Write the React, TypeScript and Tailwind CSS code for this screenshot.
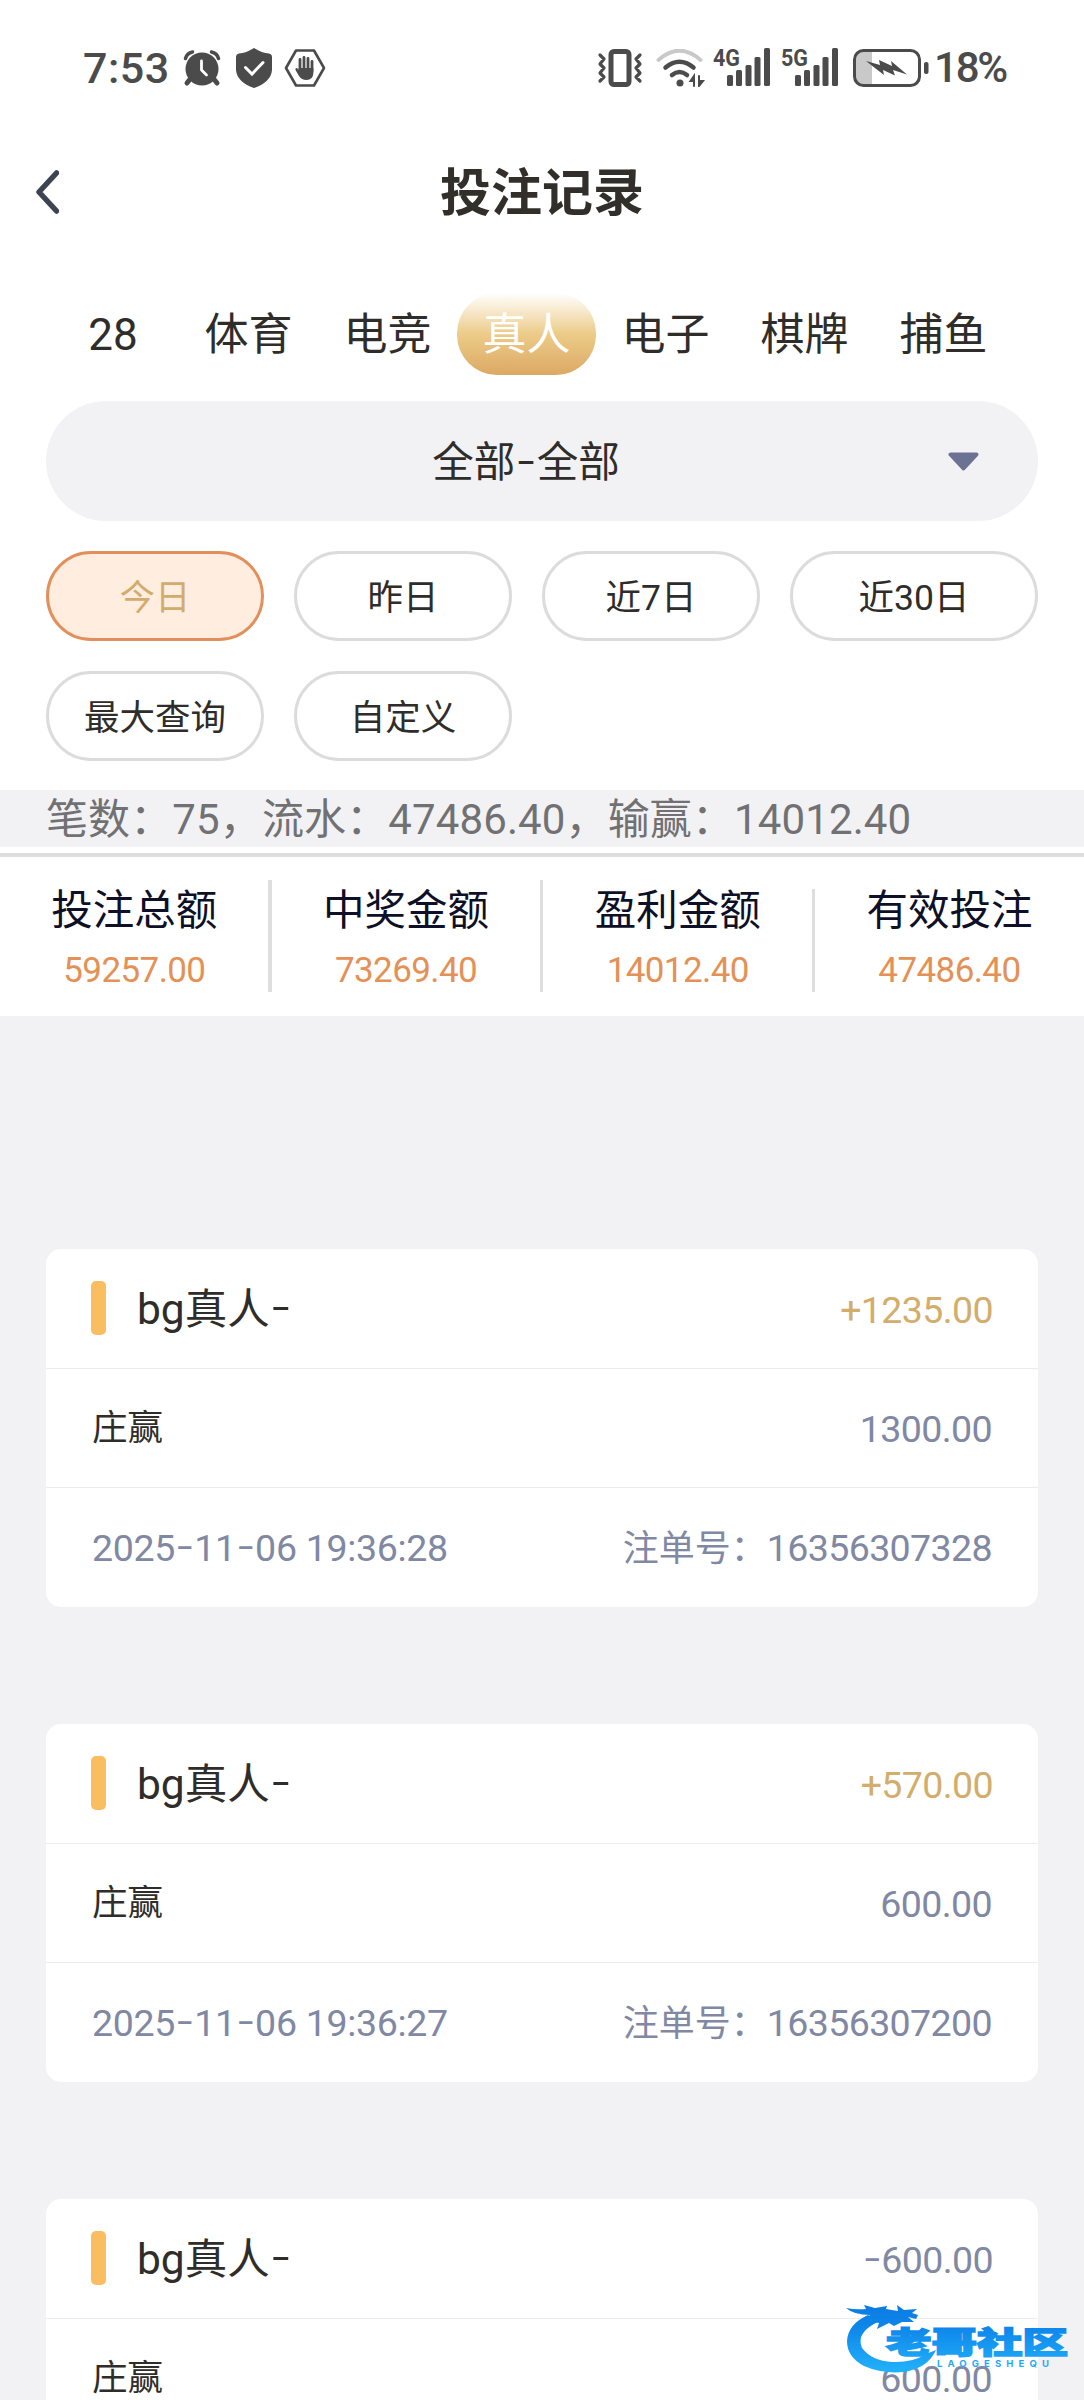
import React from 'react';

const TABS = ['28', '体育', '电竞', '真人', '电子', '棋牌', '捕鱼'];
const RANGES = ['今日', '昨日', '近7日', '近30日', '最大查询', '自定义'];

const STATS = [
  { label: '投注总额', value: '59257.00' },
  { label: '中奖金额', value: '73269.40' },
  { label: '盈利金额', value: '14012.40' },
  { label: '有效投注', value: '47486.40' },
];

const RECORDS = [
  { result: '+1235.00', stake: '1300.00', date: '2025-11-06', time: '19:36:28', no: '16356307328' },
  { result: '+570.00', stake: '600.00', date: '2025-11-06', time: '19:36:27', no: '16356307200' },
  { result: '-600.00', stake: '600.00', date: '2025-11-06', time: '19:36:25', no: '16356307064' },
];

// Roboto's hyphen is too short, so dashes are set in Inter
const Dashed: React.FC<{ text: string }> = ({ text }) => (
  <>
    {text.split('-').map((part, i) => (
      <React.Fragment key={i}>
        {i > 0 && <span className="font-['Inter'] text-[1.15em] font-light leading-none">-</span>}
        {part}
      </React.Fragment>
    ))}
  </>
);

const Signal: React.FC<{ label: string }> = ({ label }) => (
  <svg className="overflow-visible" width="58" height="40" viewBox="0 0 58 40" fill="#4b4b4b">
    <text x="0" y="18" fontSize="24" fontWeight="700" fontFamily="Roboto" textLength="27" lengthAdjust="spacingAndGlyphs">{label}</text>
    <rect x="14" y="27" width="6" height="11" rx="1.5" />
    <rect x="23" y="22" width="6" height="16" rx="1.5" />
    <rect x="32.500" y="17" width="6" height="21" rx="1.5" />
    <rect x="41.500" y="9" width="6" height="29" rx="1.5" />
    <rect x="51" y="0" width="6" height="38" rx="1.5" />
  </svg>
);

const StatusBar: React.FC = () => (
  <div className="flex h-[136px] items-start justify-between pl-[83px] pr-[76px] pt-[48px] text-[#4b4b4b]">
    <div className="flex h-[40px] items-center">
      <span className="w-[100px] text-[43px] font-medium leading-[40px] tracking-[0.5px]">7:53</span>
      <svg width="38" height="38" viewBox="0 0 38 38">
        <g stroke="#4b4b4b" strokeWidth="5" strokeLinecap="round" fill="none">
          <path d="M8 29l-4 5M30 29l4 5" />
          <path d="M2.500 9.500Q4 4 9.500 3M35.500 9.500Q34 4 28.500 3" strokeWidth="3.500" />
        </g>
        <circle cx="19" cy="20" r="16.500" fill="#4b4b4b" />
        <path d="M18.500 12v9l5 5" stroke="#fff" strokeWidth="2.800" fill="none" strokeLinecap="round" strokeLinejoin="round" />
      </svg>
      <svg className="ml-[15px]" width="36" height="40" viewBox="0 0 36 40">
        <path d="M18 0Q26 5 33 5.500Q36 6 36 9V22Q35 34 18 40Q1 34 0 22V9Q0 6 3 5.500Q10 5 18 0Z" fill="#4b4b4b" />
        <path d="M9.500 19.500l6.500 6.500l11-11.500" stroke="#fff" strokeWidth="3" fill="none" strokeLinecap="round" />
      </svg>
      <svg className="ml-[12px]" width="42" height="38" viewBox="0 0 42 38">
        <path d="M12 1.500H30L40 19L30 36.500H12L2 19Z" fill="none" stroke="#4b4b4b" strokeWidth="2.600" strokeLinejoin="round" />
        <path d="M16 22V10.500M20 20V8.500M24 20V9.500M28 22V12.500" stroke="#4b4b4b" strokeWidth="2.800" strokeLinecap="round" />
        <path d="M14.600 19H29.400V24Q29 31 22.500 31Q17.500 31 15 27L11.500 21Q11 19 12.500 19Q13.500 19 14.600 21Z" fill="#4b4b4b" />
      </svg>
    </div>
    <div className="flex h-[40px] items-center">
      <svg width="46" height="38" viewBox="0 0 46 38" fill="none" stroke="#4b4b4b">
        <rect x="14" y="2.500" width="18" height="33" rx="3" strokeWidth="5" />
        <path d="M3 6l4 4l-4 5l4 4l-4 5l4 4l-4 4M43 6l-4 4l4 5l-4 4l4 5l-4 4l4 4" strokeWidth="3.200" strokeLinecap="round" strokeLinejoin="round" />
      </svg>
      <svg className="ml-[13px]" width="50" height="38" viewBox="0 0 50 38" fill="none" strokeLinecap="round">
        <path d="M2.500 11Q23.500 -7.500 44.500 11" stroke="#c9c9c9" strokeWidth="4" />
        <path d="M9.500 18.500Q23.500 7 37.500 18.500" stroke="#4b4b4b" strokeWidth="4.500" />
        <path d="M16 26Q23.500 20 31 26" stroke="#4b4b4b" strokeWidth="4.500" />
        <circle cx="24" cy="34" r="3.500" fill="#4b4b4b" />
        <path d="M38 37V27L34.500 32H38M43 27V37L47 32H43" stroke="#4b4b4b" strokeWidth="2" fill="#4b4b4b" />
      </svg>
      <div className="ml-[7px]"><Signal label="4G" /></div>
      <div className="ml-[10px]"><Signal label="5G" /></div>
      <svg className="ml-[14px]" width="76" height="38" viewBox="0 0 76 38">
        <path d="M10 2H19V36H10Q2 36 2 28V10Q2 2 10 2Z" fill="#c9c9c9" />
        <rect x="1.500" y="1.500" width="65" height="35" rx="9" fill="none" stroke="#4b4b4b" strokeWidth="3" />
        <rect x="71" y="13" width="4.500" height="12" rx="2" fill="#4b4b4b" />
        <path d="M13 12L27 16L26 11L39 17L38 12L54 25.500L40 21L42 26.500L30 21L31 26Z" fill="#4b4b4b" />
      </svg>
      <span className="ml-[5px] w-[74px] whitespace-nowrap text-[42px] font-medium leading-[42px] tracking-[-2.200px]">18%</span>
    </div>
  </div>
);

const Header: React.FC = () => (
  <header className="flex h-[112px] items-center pl-[35px] pr-[59px]">
    <svg width="24" height="44" viewBox="0 0 24 44" fill="none">
      <path d="M21.500 3L4 22L21.500 41" stroke="#3e4354" strokeWidth="5.500" strokeLinecap="round" strokeLinejoin="round" />
    </svg>
    <h1 className="flex-1 pt-[2px] text-center text-[51px] font-bold leading-none text-[#322e2a]">投注记录</h1>
  </header>
);

const Watermark: React.FC = () => (
  <svg className="absolute bottom-[26px] right-[16px]" width="224" height="72" viewBox="0 0 224 72">
    <defs>
      <linearGradient id="wm" x1="0" y1="0" x2="0" y2="72" gradientUnits="userSpaceOnUse">
        <stop offset="0" stopColor="#0b7be0" />
        <stop offset="0.350" stopColor="#0e86ea" />
        <stop offset="1" stopColor="#22b4fa" />
      </linearGradient>
    </defs>
    <g fill="url(#wm)">
      <path d="M24 13Q4 22 3 39Q3 55 20 64Q38 72 60 70Q84 66 92 48L82 52Q68 61 48 60Q28 59 18 46Q11 30 36 19Z" />
      <path d="M2 6Q12 8 22 7L20 3L31 6L43 4L42 7L54 9L53 3L60 8L73 7L68 11L74 13L72 17L64 15L70 20L58 20L50 24L45 21L33 27L35 21L22 19L26 13Q10 13 2 6Z" />
      <text x="42" y="51" fontSize="30" fontWeight="900" fontFamily="'Noto Sans CJK SC', sans-serif" stroke="url(#wm)" strokeWidth="1.600" textLength="182" lengthAdjust="spacingAndGlyphs">老哥社区</text>
      <text x="93" y="64.500" fontSize="9.500" fontWeight="700" fontFamily="Inter" textLength="112">LAOGESHEQU</text>
    </g>
  </svg>
);

export default function App() {
  return (
    <div className="relative flex h-[2400px] w-[1084px] flex-col overflow-hidden bg-[#f2f2f4] font-['Roboto','Noto_Sans_CJK_SC',sans-serif] text-[#2f2d2a]">
      <div className="h-[790px] shrink-0 bg-white">
        <StatusBar />
        <Header />

        <nav className="flex h-[153px] items-center pl-[47px] pt-[18px]">
          {TABS.map((tab, i) => (
            <button
              key={tab}
              className={`h-[82px] shrink-0 pt-[2px] text-[44px] leading-none ${i === 0 ? 'w-[132px]' : 'w-[139px]'} ${
                tab === '真人' ? 'rounded-[40px] bg-linear-to-b from-white via-[#eccb88] to-[#dba964] text-white' : ''
              }`}
            >
              {tab}
            </button>
          ))}
        </nav>

        <div className="px-[46px]">
          <div className="flex h-[120px] items-center rounded-full bg-[#f2f2f4] pl-[46px] pr-[59px]">
            <span className="flex-1 pl-[12px] pt-[4px] text-center text-[41.500px]"><Dashed text="全部-全部" /></span>
            <svg width="31" height="19" viewBox="0 0 31 19">
              <path d="M2.500 2.500H28.500L15.500 16.500Z" fill="#6b7293" stroke="#6b7293" strokeWidth="4" strokeLinejoin="round" />
            </svg>
          </div>

          <div className="mt-[30px] grid grid-cols-[218px_218px_218px_248px] gap-[30px]">
            {RANGES.map((range) => (
              <button
                key={range}
                className={`h-[90px] rounded-full border-[3.500px] pt-[5px] text-[35.500px] leading-none ${
                  range === '今日' ? 'border-[#e28f5c] bg-[#ffeddf] text-[#d2ac6c]' : 'border-[#dcdcdc]'
                }`}
              >
                {range}
              </button>
            ))}
          </div>
        </div>
      </div>

      <div className="h-[57px] shrink-0 whitespace-nowrap pl-[46px] pt-[2px] text-[42px] leading-[56px] tracking-[0.120px] text-[#717173]">
        笔数：75，流水：47486.40，输赢：14012.40
      </div>

      <div className="h-[169px] shrink-0 bg-white pt-[6px]">
        <div className="h-[4px] bg-[#dedede]" />
        <div className="flex pt-[23px]">
          {STATS.map((stat, i) => (
            <div key={stat.label} className="relative flex h-[112px] w-[271.700px] shrink-0 flex-col items-center pr-[3px]">
              <span className="mt-[6px] text-[41.500px] leading-[50px] text-[#0d1026]">{stat.label}</span>
              <span className="mt-[12px] text-[35px] leading-[46px] tracking-[-0.600px] text-[#e39156]">{stat.value}</span>
              {i < 3 && (
                <span className={`absolute bottom-0 right-0 w-[3.500px] bg-[#dedede] ${i === 2 ? 'h-[103px]' : 'h-[112px]'}`} />
              )}
            </div>
          ))}
        </div>
      </div>

      <main className="flex flex-col gap-[117px] px-[46px] pt-[233px]">
        {RECORDS.map((record) => (
          <article key={record.no} className="h-[358px] shrink-0 divide-y divide-[#ececee] rounded-[15px] bg-white text-[37.500px] tracking-[-0.600px] text-[#8088a3]">
            <div className="flex h-[119.500px] items-center px-[45px]">
              <span className="h-[54px] w-[15px] rounded-[5px] bg-[#fabd60]" />
              <span className="ml-[31px] flex-1 pt-[4px] text-[42.500px] tracking-normal text-[#2f2d2a]"><Dashed text="bg真人-" /></span>
              <span className={`pt-[3px] ${record.result.startsWith('+') ? 'text-[#d3ad6b]' : ''}`}><Dashed text={record.result} /></span>
            </div>
            <div className="flex h-[119px] items-center justify-between px-[46px] pt-[3px]">
              <span className="text-[35.500px] tracking-normal text-[#2f2d2a]">庄赢</span>
              <span>{record.stake}</span>
            </div>
            <div className="flex h-[119px] items-center justify-between px-[46px] pt-[3px]">
              <span className="tracking-[-0.300px]"><Dashed text={`${record.date} ${record.time}`} /></span>
              <span><span className="text-[36px] tracking-normal">注单号：</span>{record.no}</span>
            </div>
          </article>
        ))}
      </main>

      <Watermark />
    </div>
  );
}
